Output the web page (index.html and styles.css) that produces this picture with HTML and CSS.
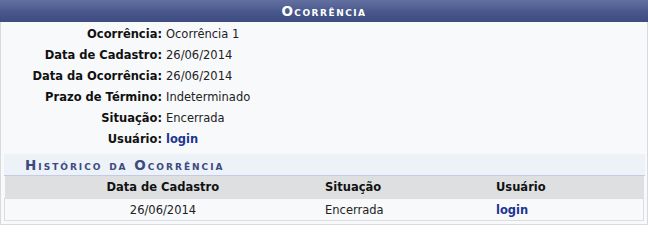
FILE: index.html
```html
<!DOCTYPE html>
<html lang="pt-BR">
<head>
<meta charset="utf-8">
<title>Ocorrência</title>
<link rel="stylesheet" href="styles.css">
</head>
<body>
<div class="panel">
  <div class="caption">Ocorrência</div>
  <div class="body">
    <div class="fields">
      <div class="row"><span class="label">Ocorrência:</span><span class="value">Ocorrência 1</span></div>
      <div class="row"><span class="label">Data de Cadastro:</span><span class="value">26/06/2014</span></div>
      <div class="row"><span class="label">Data da Ocorrência:</span><span class="value">26/06/2014</span></div>
      <div class="row"><span class="label">Prazo de Término:</span><span class="value">Indeterminado</span></div>
      <div class="row"><span class="label">Situação:</span><span class="value">Encerrada</span></div>
      <div class="row"><span class="label">Usuário:</span><span class="value"><a class="link" href="#">login</a></span></div>
    </div>
    <div class="history">
      <div class="subtitle">Histórico da Ocorrência</div>
      <table class="grid">
        <thead>
          <tr><th class="c1">Data de Cadastro</th><th class="c2">Situação</th><th class="c3">Usuário</th></tr>
        </thead>
        <tbody>
          <tr><td class="c1">26/06/2014</td><td class="c2">Encerrada</td><td class="c3"><a class="link" href="#">login</a></td></tr>
        </tbody>
      </table>
    </div>
  </div>
</div>
</body>
</html>
```

FILE: styles.css
```css
html, body {
  margin: 0;
  padding: 0;
  background: #ffffff;
}
body {
  font-family: "DejaVu Sans", Verdana, sans-serif;
  font-size: 11.5px;
  color: #222;
}
.panel {
  width: 648px;
  height: 225px;
  box-sizing: border-box;
}
.caption {
  height: 22px;
  line-height: 22px;
  background: linear-gradient(#6371a1, #46558a 60%, #3e4c80);
  color: #fff;
  text-align: center;
  font-weight: bold;
  font-size: 13.5px;
  font-variant: small-caps;
  letter-spacing: 1.5px;
}
.body {
  background: #f8f9fb;
  border: 1px solid #d9dadd;
  border-top: none;
  height: 203px;
  box-sizing: border-box;
  padding: 1px 2px 0 3px;
}
.fields {
  display: flex;
  flex-direction: column;
}
.row {
  display: flex;
  height: 21px;
  align-items: center;
}
.label {
  width: 158px;
  text-align: right;
  font-weight: bold;
  color: #111;
  padding-right: 4px;
}
.value {
  color: #222;
}
.link {
  color: #1b3590;
  font-weight: bold;
  text-decoration: none;
}
.history {
  margin-top: 5px;
}
.subtitle {
  height: 21px;
  line-height: 22px;
  background: #edf1f8;
  border-bottom: 1px solid #c3cce4;
  padding-left: 21px;
  color: #3b4a7e;
  font-weight: bold;
  font-size: 13.5px;
  font-variant: small-caps;
  letter-spacing: 2px;
}
.grid {
  width: 640px;
  border-collapse: collapse;
}
.grid th {
  background: #dedfe1;
  height: 22px;
  padding: 0 4px;
  font-weight: bold;
  color: #111;
}
.grid td {
  height: 21px;
  padding: 0 4px;
  background: #f8f9fb;
  border-top: 1px solid #dcdde0;
  border-bottom: 1px solid #dcdde0;
}
.grid td:first-child {
  border-left: 1px solid #dcdde0;
}
.grid td:last-child {
  border-right: 1px solid #dcdde0;
}
.c1 {
  width: 308px;
  text-align: center;
}
.c2 {
  width: 163px;
  text-align: left;
}
.c3 {
  text-align: left;
}
```
